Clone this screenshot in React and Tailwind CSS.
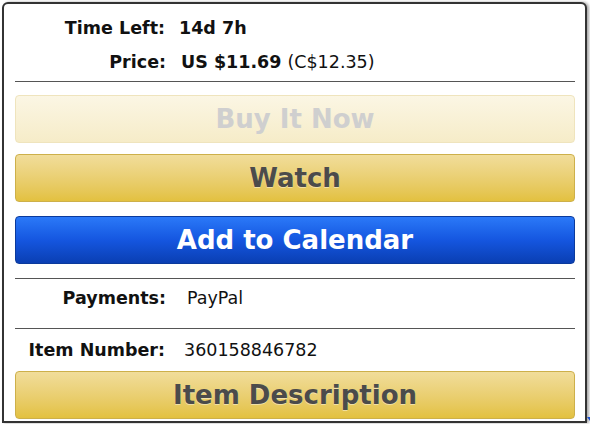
export default function App() {
  return (
    <div className="w-[590px] h-[424px] bg-white relative overflow-hidden font-['DejaVu_Sans',sans-serif] text-[#111]">
      <div className="absolute left-[2px] top-[2px] w-[585px] h-[421px] border-2 border-[#333] rounded-t-[6px] bg-white shadow-[2px_0_3px_rgba(0,0,0,0.35)] pl-[11px] pr-[10px] flex flex-col">
        {/* Time left / price */}
        <div className="h-[48px] flex items-center text-[17.5px]">
          <span className="w-[150px] text-right font-bold">Time Left:</span>
          <span className="ml-[14px] font-bold">14d 7h</span>
        </div>
        <div className="h-[20px] flex items-center text-[17.5px]">
          <span className="w-[151px] text-right font-bold">Price:</span>
          <span className="ml-[15px] font-bold">US $11.69</span>
          <span className="ml-[6px]">(C$12.35)</span>
        </div>
        <div className="mt-[9px] h-px bg-[#555]" />

        {/* Buttons */}
        <button className="mt-[13px] h-[48px] rounded-[4px] border border-[#efe4bd] bg-gradient-to-b from-[#fbf6e4] to-[#f6ecc8] text-[26px] font-bold text-[#cfcfcf] leading-none">
          Buy It Now
        </button>
        <button className="mt-[11px] h-[48px] rounded-[4px] border border-[#cdb04a] bg-gradient-to-b from-[#f1dd9a] to-[#e3c13f] text-[26px] font-bold text-[#4b4b4b] leading-none [text-shadow:0_1px_0_rgba(255,255,255,0.45)]">
          Watch
        </button>
        <button className="mt-[14px] h-[48px] rounded-[4px] border border-[#0b3a9c] bg-gradient-to-b from-[#2b79f8] via-[#1556e0] to-[#0a3fb3] text-[26px] font-bold text-white leading-none">
          Add to Calendar
        </button>
        <div className="mt-[14px] h-px bg-[#555]" />

        {/* Payments */}
        <div className="h-[36px] pt-[2px] flex items-center text-[17.5px]">
          <span className="w-[151px] text-right font-bold">Payments:</span>
          <span className="ml-[21px]">PayPal</span>
        </div>
        <div className="mt-[13px] h-px bg-[#555]" />

        {/* Item number */}
        <div className="h-[40px] pt-[2px] flex items-center text-[17.5px]">
          <span className="w-[150px] text-right font-bold">Item Number:</span>
          <span className="ml-[19px]">360158846782</span>
        </div>
        <button className="mt-[2px] h-[48px] rounded-[4px] border border-[#cdb04a] bg-gradient-to-b from-[#f1dd9a] to-[#e3c13f] text-[26px] font-bold text-[#4b4b4b] leading-none [text-shadow:0_1px_0_rgba(255,255,255,0.45)]">
          Item Description
        </button>
      </div>
      <div className="absolute left-[587px] top-[417px] w-0 h-0 border-l-[3px] border-l-transparent border-t-[4px] border-t-[#1a4fd0]" />
    </div>
  );
}
